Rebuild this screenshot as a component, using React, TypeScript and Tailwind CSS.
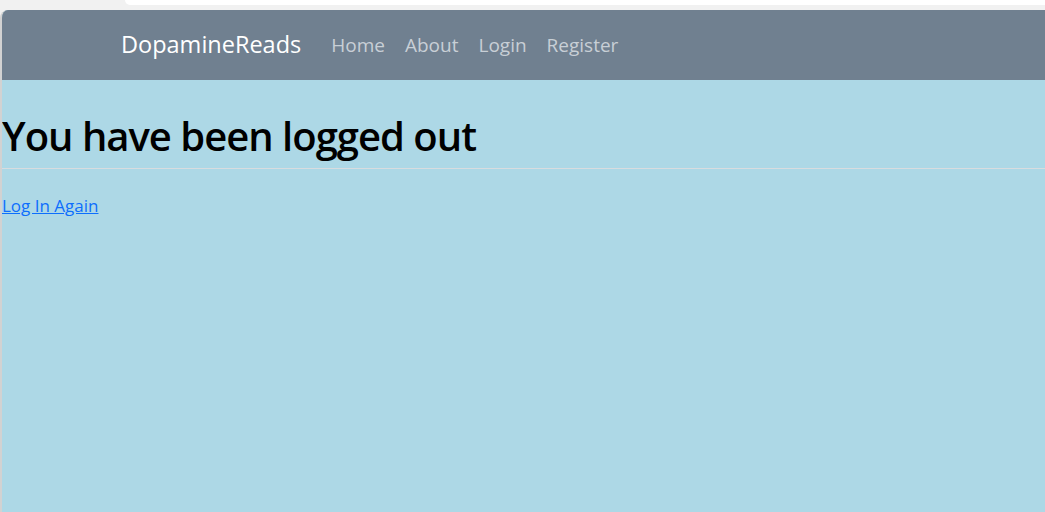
import React from "react";

export default function App() {
  const font = { fontFamily: '"Open Sans", "Noto Sans", sans-serif' };
  return (
    <div className="w-[1045px] h-[512px] flex flex-col bg-[#f1f1f1] overflow-hidden" style={font}>
      <div className="h-[10px] shrink-0 flex">
        <div className="ml-[125px] flex-1 h-[5px] bg-white rounded-bl-[6px]" />
      </div>
      <div className="flex-1 flex flex-col bg-[#add8e6] border-l-2 border-[#d2d2d2] rounded-tl-[8px] overflow-hidden">
        <nav className="h-[70px] shrink-0 bg-[#708090] flex items-center pl-[119px]">
          <span className="text-[23.5px] text-white mr-[30px] leading-none">DopamineReads</span>
          <div className="flex gap-[20px] text-[19px] text-[#c8cfd6] leading-none">
            <a>Home</a>
            <a>About</a>
            <a>Login</a>
            <a>Register</a>
          </div>
        </nav>
        <h1 className="text-[40px] font-semibold tracking-[-1px] text-black leading-[48px] mt-[32px]">You have been logged out</h1>
        <hr className="mt-[8px] border-t border-[#d8dcdf]" />
        <div className="mt-[25px] leading-[24px]">
          <a className="text-[17px] text-[#0d6efd] underline">Log In Again</a>
        </div>
      </div>
    </div>
  );
}
